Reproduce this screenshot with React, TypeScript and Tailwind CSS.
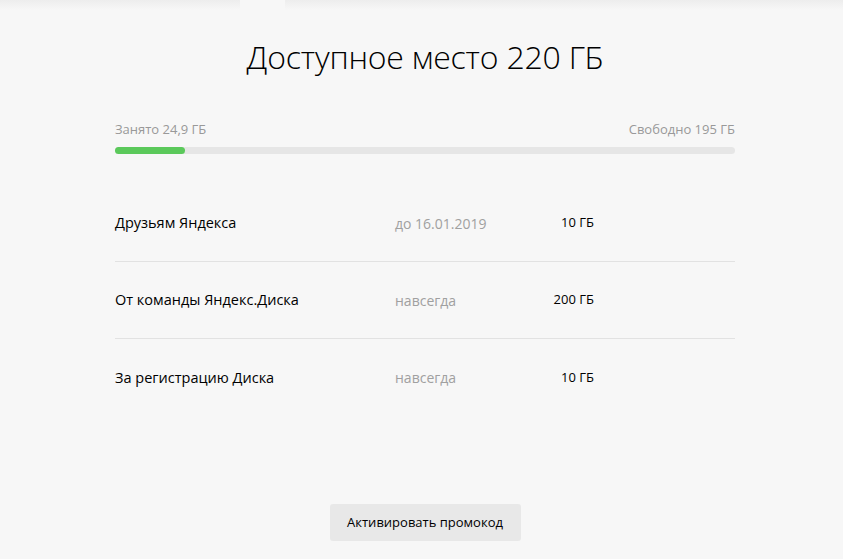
import React from 'react';

interface Bonus {
    title: string;
    term: string;
    size: string;
}

const BONUSES: Bonus[] = [
    { title: 'Друзьям Яндекса', term: 'до 16.01.2019', size: '10 ГБ' },
    { title: 'От команды Яндекс.Диска', term: 'навсегда', size: '200 ГБ' },
    { title: 'За регистрацию Диска', term: 'навсегда', size: '10 ГБ' },
];

const USED = 24.9;
const TOTAL = 220;

export default function App() {
    const percent = (USED / TOTAL) * 100;

    return (
        <div className="min-h-[559px] bg-[#f7f7f7] font-['Open_Sans',sans-serif] text-black">
            {/* shadows of the panels above */}
            <div className="flex h-[10px] gap-[45px]">
                <div className="w-[240px] bg-gradient-to-b from-[#ededed] to-[#f7f7f7]" />
                <div className="flex-1 bg-gradient-to-b from-[#ededed] to-[#f7f7f7]" />
            </div>

            <div className="pl-[7px]">
                <div className="mx-auto w-[620px]">
                    <h1 className="mt-[25px] text-center text-[32px] font-light leading-[44px] tracking-[-0.2px]">
                        Доступное место 220 ГБ
                    </h1>

                    <div className="mt-[41px] flex justify-between text-[13px] leading-[18px] text-[#999]">
                        <span>Занято 24,9 ГБ</span>
                        <span>Свободно 195 ГБ</span>
                    </div>
                    <div className="mt-[9px] h-[7px] rounded-full bg-[#e6e6e6]">
                        <div className="h-full rounded-full bg-[#5bc95b]" style={{ width: `${percent}%` }} />
                    </div>

                    <div className="mt-[31px]">
                        {BONUSES.map((b, i) => (
                            <div
                                key={b.title}
                                className={`flex h-[77px] items-center ${i < BONUSES.length - 1 ? 'border-b border-[#e2e2e2]' : ''}`}
                            >
                                <div className="w-[280px] text-[14.5px]">{b.title}</div>
                                <div className="w-[120px] text-[14px] text-[#a0a0a0]">{b.term}</div>
                                <div className="w-[79px] text-right text-[13px]">{b.size}</div>
                            </div>
                        ))}
                    </div>

                    <div className="mt-[88px] flex justify-center">
                        <button className="h-[37px] w-[191px] rounded-[3px] bg-[#e8e8e8] text-[13px] text-black">
                            Активировать промокод
                        </button>
                    </div>
                </div>
            </div>
        </div>
    );
}
